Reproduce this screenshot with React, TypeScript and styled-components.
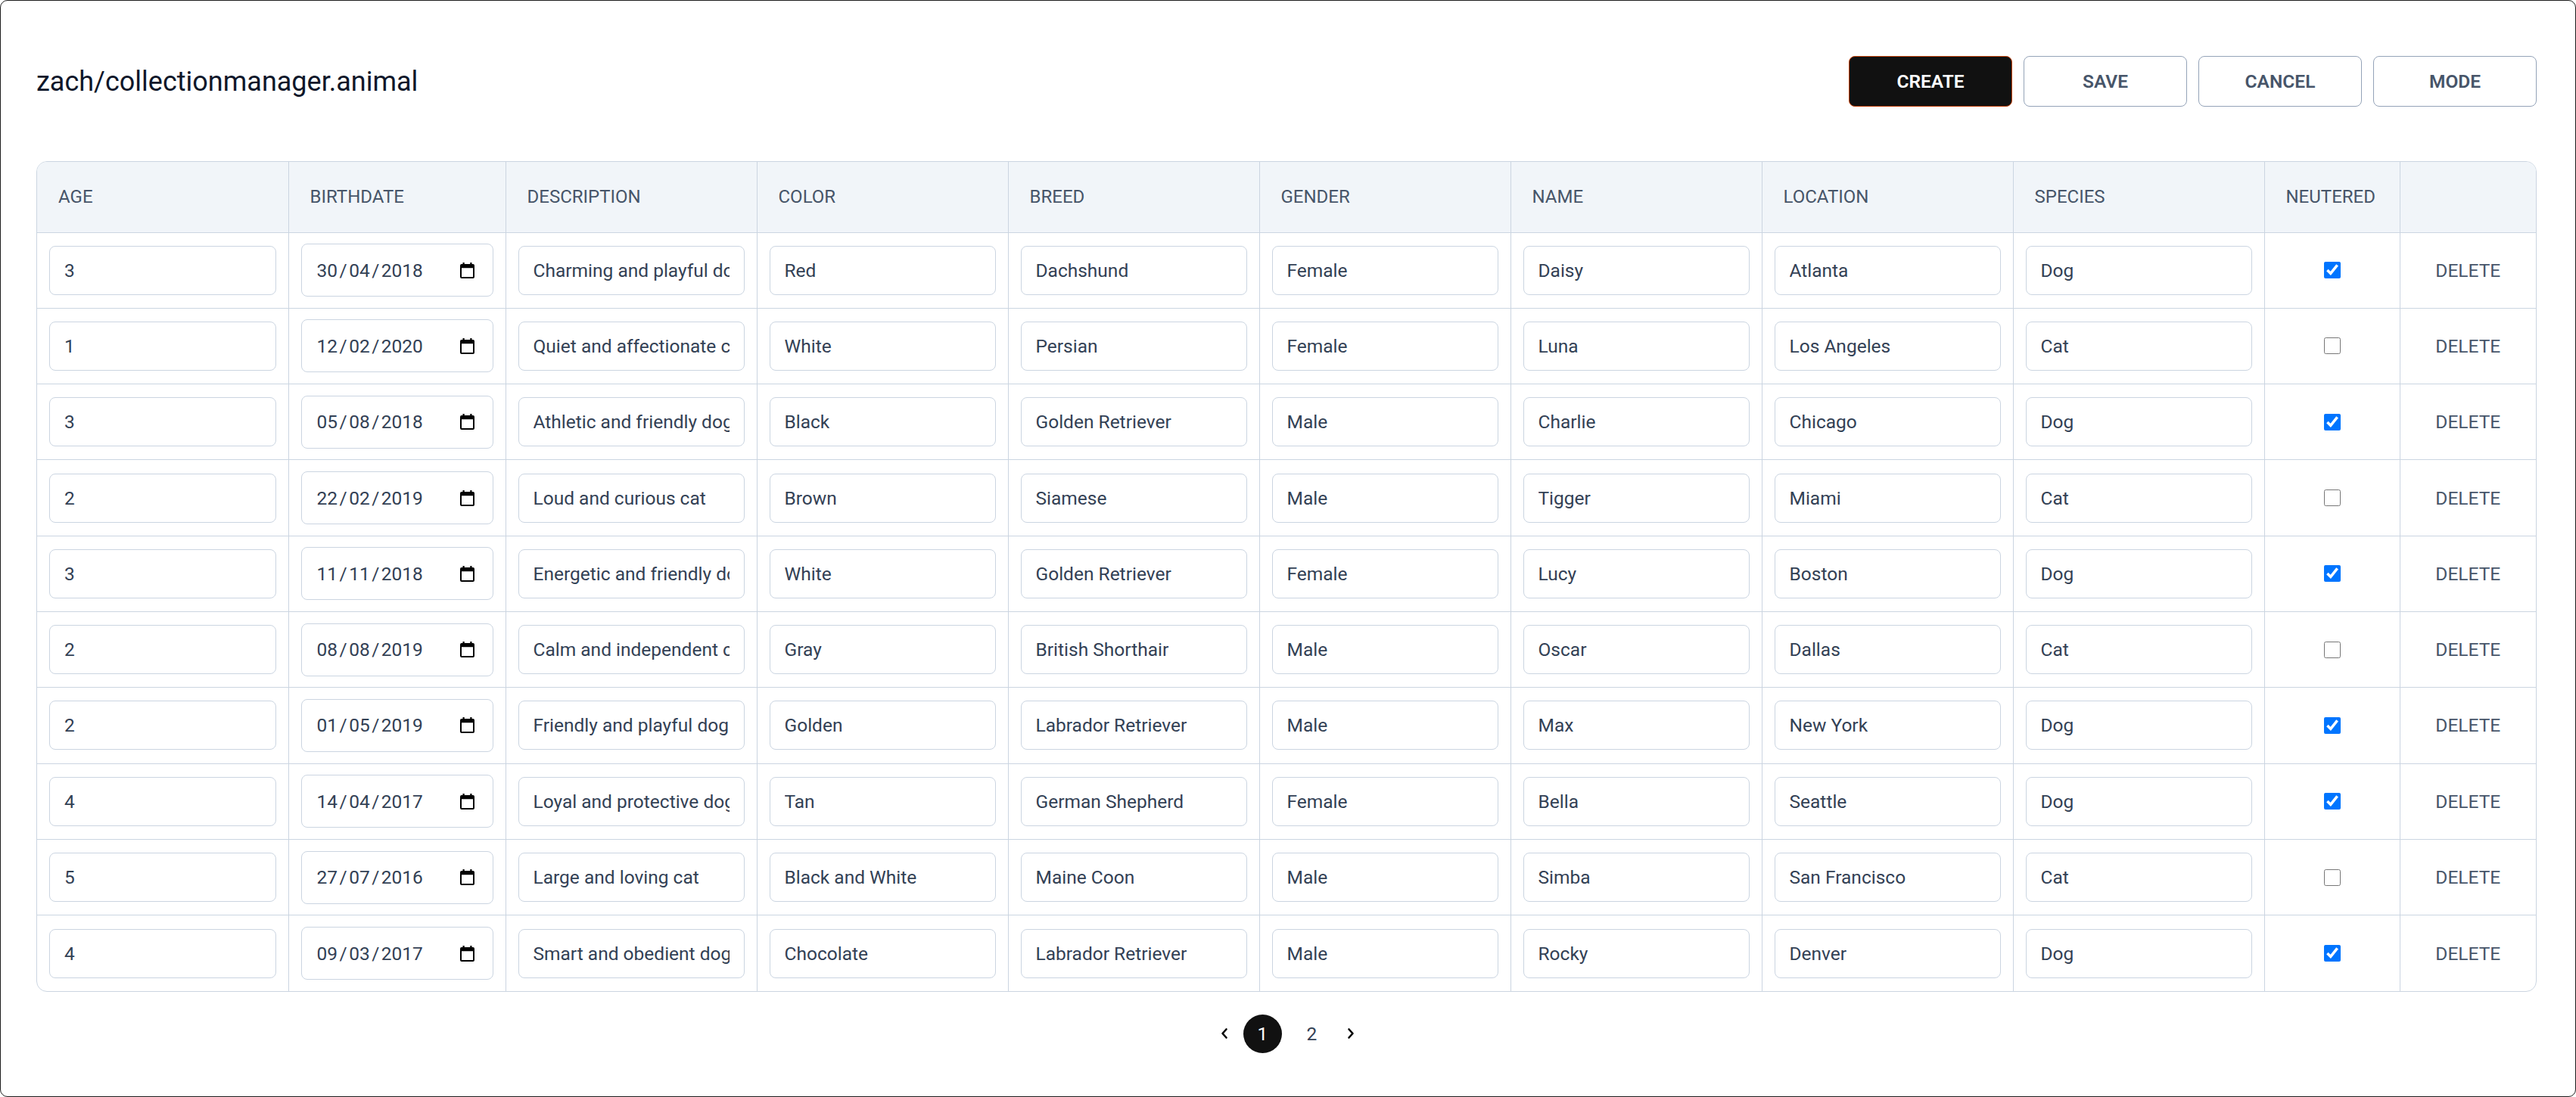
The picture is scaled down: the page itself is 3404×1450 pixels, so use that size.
import styled, { createGlobalStyle } from "styled-components";

type Animal = {
  age: string;
  birthdate: string;
  description: string;
  color: string;
  breed: string;
  gender: string;
  name: string;
  location: string;
  species: string;
  neutered: boolean;
};

const animals: Animal[] = [
  { age: "3", birthdate: "30/04/2018", description: "Charming and playful dog", color: "Red", breed: "Dachshund", gender: "Female", name: "Daisy", location: "Atlanta", species: "Dog", neutered: true },
  { age: "1", birthdate: "12/02/2020", description: "Quiet and affectionate cat", color: "White", breed: "Persian", gender: "Female", name: "Luna", location: "Los Angeles", species: "Cat", neutered: false },
  { age: "3", birthdate: "05/08/2018", description: "Athletic and friendly dog", color: "Black", breed: "Golden Retriever", gender: "Male", name: "Charlie", location: "Chicago", species: "Dog", neutered: true },
  { age: "2", birthdate: "22/02/2019", description: "Loud and curious cat", color: "Brown", breed: "Siamese", gender: "Male", name: "Tigger", location: "Miami", species: "Cat", neutered: false },
  { age: "3", birthdate: "11/11/2018", description: "Energetic and friendly dog", color: "White", breed: "Golden Retriever", gender: "Female", name: "Lucy", location: "Boston", species: "Dog", neutered: true },
  { age: "2", birthdate: "08/08/2019", description: "Calm and independent cat", color: "Gray", breed: "British Shorthair", gender: "Male", name: "Oscar", location: "Dallas", species: "Cat", neutered: false },
  { age: "2", birthdate: "01/05/2019", description: "Friendly and playful dog", color: "Golden", breed: "Labrador Retriever", gender: "Male", name: "Max", location: "New York", species: "Dog", neutered: true },
  { age: "4", birthdate: "14/04/2017", description: "Loyal and protective dog", color: "Tan", breed: "German Shepherd", gender: "Female", name: "Bella", location: "Seattle", species: "Dog", neutered: true },
  { age: "5", birthdate: "27/07/2016", description: "Large and loving cat", color: "Black and White", breed: "Maine Coon", gender: "Male", name: "Simba", location: "San Francisco", species: "Cat", neutered: false },
  { age: "4", birthdate: "09/03/2017", description: "Smart and obedient dog", color: "Chocolate", breed: "Labrador Retriever", gender: "Male", name: "Rocky", location: "Denver", species: "Dog", neutered: true },
];

const columns = [
  { label: "Age", width: 332 },
  { label: "Birthdate", width: 287 },
  { label: "Description", width: 332 },
  { label: "Color", width: 332 },
  { label: "Breed", width: 332 },
  { label: "Gender", width: 332 },
  { label: "Name", width: 332 },
  { label: "Location", width: 332 },
  { label: "Species", width: 332 },
  { label: "Neutered", width: 179 },
  { label: "", width: 180 },
];

const textKeys: (keyof Animal)[] = ["color", "breed", "gender", "name", "location", "species"];

const CalendarIcon = () => (
  <svg width="19" height="21" viewBox="0 0 19 21">
    <path
      fillRule="evenodd"
      fill="#000"
      d="M3.5 0h2.2v2h7.6V0h2.2v2H17a2 2 0 0 1 2 2v15a2 2 0 0 1-2 2H2a2 2 0 0 1-2-2V4a2 2 0 0 1 2-2h1.5zM2 7.2V19h15V7.2z"
    />
  </svg>
);

const Chevron = ({ dir }: { dir: "left" | "right" }) => (
  <svg width="10" height="16" viewBox="0 0 10 16">
    <path
      d={dir === "left" ? "M7.5 2.5 2.5 8l5 5.5" : "M2.5 2.5 7.5 8l-5 5.5"}
      fill="none"
      stroke="#000"
      strokeWidth="2.6"
      strokeLinecap="round"
      strokeLinejoin="round"
    />
  </svg>
);

const DateField = ({ value }: { value: string }) => {
  const parts = value.split("/");
  return (
    <DateBox>
      <DateText>
        {parts.map((p, i) => (
          <span key={i}>
            {i > 0 && <Slash>/</Slash>}
            {p}
          </span>
        ))}
      </DateText>
      <CalendarIcon />
    </DateBox>
  );
};

const App = () => {
  return (
    <>
      <GlobalStyle />
      <Frame>
        <TopBar>
          <Title>zach/collectionmanager.animal</Title>
          <Actions>
            <ActionButton $primary>Create</ActionButton>
            <ActionButton>Save</ActionButton>
            <ActionButton>Cancel</ActionButton>
            <ActionButton>Mode</ActionButton>
          </Actions>
        </TopBar>

        <TableWrap>
          <Table>
            <colgroup>
              {columns.map((c, i) => (
                <Col key={i} $w={c.width} />
              ))}
            </colgroup>
            <thead>
              <HeadRow>
                {columns.map((c, i) => (
                  <Th key={i}>{c.label}</Th>
                ))}
              </HeadRow>
            </thead>
            <tbody>
              {animals.map((a, r) => (
                <Row key={r}>
                  <Td>
                    <TextField defaultValue={a.age} />
                  </Td>
                  <Td>
                    <DateField value={a.birthdate} />
                  </Td>
                  <Td>
                    <TextField defaultValue={a.description} />
                  </Td>
                  {textKeys.map((k) => (
                    <Td key={k}>
                      <TextField defaultValue={a[k] as string} />
                    </Td>
                  ))}
                  <Td $center>
                    <Check type="checkbox" defaultChecked={a.neutered} />
                  </Td>
                  <Td $center>
                    <DeleteLink>Delete</DeleteLink>
                  </Td>
                </Row>
              ))}
            </tbody>
          </Table>
        </TableWrap>

        <Pager>
          <PagerArrow>
            <Chevron dir="left" />
          </PagerArrow>
          <PageNum $active>1</PageNum>
          <PageNum>2</PageNum>
          <PagerArrow>
            <Chevron dir="right" />
          </PagerArrow>
        </Pager>
      </Frame>
    </>
  );
};

export default App;

const GlobalStyle = createGlobalStyle`
  html, body {
    margin: 0;
    padding: 0;
    background: #fff;
  }
  body {
    font-family: Roboto, "Liberation Sans", Arial, sans-serif;
  }
  * {
    box-sizing: border-box;
  }
`;

const Frame = styled.div`
  height: 100vh;
  border: 1px solid #1c1c1c;
  border-radius: 10px;
  padding: 73px 51px 0 47px;
  display: flex;
  flex-direction: column;
  overflow: hidden;
`;

const TopBar = styled.div`
  display: flex;
  align-items: center;
  justify-content: space-between;
  height: 67px;
`;

const Title = styled.h1`
  margin: 0;
  font-size: 36px;
  font-weight: 400;
  color: #0f172a;
`;

const Actions = styled.div`
  display: flex;
  gap: 15px;
`;

const ActionButton = styled.button<{ $primary?: boolean }>`
  width: 216px;
  height: 67px;
  border-radius: 8px;
  font-family: Roboto, "Liberation Sans", Arial, sans-serif;
  font-size: 24.5px;
  font-weight: 600;
  text-transform: uppercase;
  cursor: pointer;
  background: ${({ $primary }) => ($primary ? "#111111" : "#ffffff")};
  color: ${({ $primary }) => ($primary ? "#ffffff" : "#475569")};
  border: 1.5px solid ${({ $primary }) => ($primary ? "#c2410c" : "#94a3b8")};
`;

const TableWrap = styled.div`
  margin-top: 72px;
  border: 1px solid #cbd5e1;
  border-radius: 14px;
  overflow: hidden;
`;

const Table = styled.table`
  width: 100%;
  table-layout: fixed;
  border-collapse: collapse;
`;

const Col = styled.col<{ $w: number }>`
  width: ${({ $w }) => $w}px;
`;

const HeadRow = styled.tr`
  height: 93px;
  background: #f1f5f9;
  border-bottom: 1px solid #cbd5e1;
`;

const Th = styled.th`
  padding: 0 0 0 28px;
  text-align: left;
  font-size: 24px;
  font-weight: 400;
  color: #475569;
  text-transform: uppercase;
  border-right: 1px solid #cbd5e1;
  &:last-child {
    border-right: none;
  }
`;

const Row = styled.tr`
  height: 100.3px;
  border-bottom: 1px solid #cbd5e1;
  &:last-child {
    border-bottom: none;
  }
`;

const Td = styled.td<{ $center?: boolean }>`
  padding: 0 16px;
  vertical-align: middle;
  text-align: ${({ $center }) => ($center ? "center" : "left")};
  border-right: 1px solid #cbd5e1;
  &:last-child {
    border-right: none;
  }
`;

const TextField = styled.input`
  display: block;
  width: 100%;
  height: 65px;
  padding: 0 19px;
  border: 1px solid #cbd5e1;
  border-radius: 8px;
  background: #fff;
  font-family: Roboto, "Liberation Sans", Arial, sans-serif;
  font-size: 24.5px;
  color: #334155;
  outline: none;
`;

const DateBox = styled.div`
  display: flex;
  align-items: center;
  justify-content: space-between;
  width: 100%;
  height: 70px;
  padding: 0 24px 0 20px;
  border: 1px solid #cbd5e1;
  border-radius: 8px;
  background: #fff;
`;

const DateText = styled.span`
  font-size: 24.5px;
  color: #334155;
  white-space: nowrap;
`;

const Slash = styled.span`
  margin: 0 2.5px;
`;

const Check = styled.input`
  width: 22px;
  height: 22px;
  margin: 0;
  vertical-align: middle;
`;

const DeleteLink = styled.span`
  font-size: 24.5px;
  font-weight: 400;
  color: #475569;
  text-transform: uppercase;
  cursor: pointer;
`;

const Pager = styled.nav`
  margin-top: 30px;
  display: flex;
  align-items: center;
  justify-content: center;
  gap: 14px;
  padding-left: 2px;
`;

const PagerArrow = styled.button`
  width: 23px;
  height: 51px;
  padding: 0;
  border: none;
  background: transparent;
  display: flex;
  align-items: center;
  justify-content: center;
  cursor: pointer;
`;

const PageNum = styled.button<{ $active?: boolean }>`
  width: 51px;
  height: 51px;
  border-radius: 50%;
  border: none;
  padding: 0;
  font-family: Roboto, "Liberation Sans", Arial, sans-serif;
  font-size: 24.5px;
  font-weight: 400;
  background: ${({ $active }) => ($active ? "#111111" : "transparent")};
  color: ${({ $active }) => ($active ? "#ffffff" : "#334155")};
  cursor: pointer;
`;
